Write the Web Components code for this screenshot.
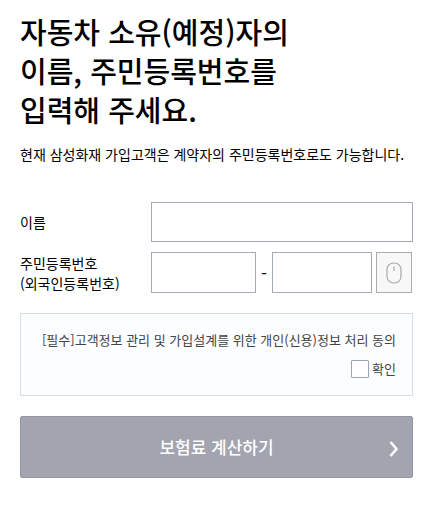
<!DOCTYPE html>
<html lang="ko">
<head>
<meta charset="utf-8">
<meta name="viewport" content="width=device-width, initial-scale=1">
<title>보험료 계산하기</title>
<style>
    body {
        margin: 0;
        background: #fff;
        color: #000;
        font: 13px/20px "Noto Sans CJK KR", sans-serif;
    }
</style>
</head>
<body>
<premium-form>
    <page-heading>
        자동차 소유(예정)자의<br>이름, 주민등록번호를<br>입력해 주세요.
        <span slot="note">현재 삼성화재 가입고객은 계약자의 주민등록번호로도 가능합니다.</span>
    </page-heading>
    <name-field></name-field>
    <resident-number-field></resident-number-field>
    <consent-box>[필수]고객정보 관리 및 가입설계를 위한 개인(신용)정보 처리 동의</consent-box>
    <submit-button>보험료 계산하기</submit-button>
</premium-form>

<script>
/** Styles shared by the labelled rows of the form. */
const fieldStyles = `
    :host {
        display: grid;
        grid-template-columns: 131px 1fr;
        align-items: center;
        margin-bottom: 10px;
        font-size: 14px;
    }
    input {
        box-sizing: border-box;
        width: 100%;
        min-width: 0;
        height: 40px;
        margin: 0;
        padding: 0 10px;
        border: 1px solid #a3abb5;
        border-radius: 0;
        background: #fff;
        font: inherit;
    }
`;

/**
 * Base class: attaches an open shadow root and fills it from template().
 */
class BaseElement extends HTMLElement {
    constructor() {
        super();
        this.attachShadow({ mode: 'open' });
        this.shadowRoot.innerHTML = this.template();
    }
}

/**
 * <premium-form> Page column that holds all parts of the form.
 */
class PremiumForm extends BaseElement {
    template() {
        return `
            <style>
                :host { display: block; padding: 12px 9px 32px 20px; }
            </style>
            <slot></slot>
        `;
    }
}

/**
 * <page-heading> Title with a note below it.
 */
class PageHeading extends BaseElement {
    template() {
        return `
            <style>
                :host { display: block; margin-bottom: 38px; }
                h1 { margin: 0 0 15px; font-size: 29px; line-height: 39px; font-weight: 500; }
                p { margin: 0; font-size: 14px; line-height: 20px; white-space: nowrap; }
            </style>
            <h1><slot></slot></h1>
            <p><slot name="note"></slot></p>
        `;
    }
}

/**
 * <name-field> Name row.
 */
class NameField extends BaseElement {
    template() {
        return `
            <style>${fieldStyles}</style>
            <label for="name">이름</label>
            <input id="name" type="text">
        `;
    }
}

/**
 * <resident-number-field> Two-part registration number with a mouse entry button.
 */
class ResidentNumberField extends BaseElement {
    template() {
        return `
            <style>
                ${fieldStyles}
                :host { margin-bottom: 20px; }
                .parts {
                    display: grid;
                    grid-template-columns: 105fr 16px 100fr 40px;
                    align-items: center;
                    padding-right: 1px;
                }
                input, button { height: 41px; }
                .dash { text-align: center; font-size: 17px; }
                button {
                    display: flex;
                    align-items: center;
                    justify-content: center;
                    margin: 0 0 0 4px;
                    padding: 0;
                    border: 1px solid #ababab;
                    background: #f8f8f8;
                }
            </style>
            <label for="front">주민등록번호<br>(외국인등록번호)</label>
            <div class="parts">
                <input id="front" type="text" maxlength="6">
                <span class="dash">-</span>
                <input type="password" maxlength="7" aria-label="주민등록번호 뒷자리">
                <button type="button" aria-label="마우스 입력">
                    <svg width="16" height="22" viewBox="0 0 16 22" fill="none" stroke="#aaa">
                        <rect x="1" y="1" width="14" height="20" rx="6.5" stroke-width="1.2"/>
                        <path d="M8 4.5v4.5" stroke-width="1.2"/>
                    </svg>
                </button>
            </div>
        `;
    }
}

/**
 * <consent-box> Consent text with its tick box.
 */
class ConsentBox extends BaseElement {
    template() {
        return `
            <style>
                :host {
                    display: block;
                    margin-bottom: 20px;
                    padding: 16px;
                    border: 1px solid #d8dce6;
                    background: #fcfdff;
                    color: #444;
                }
                p { margin: 0 0 9px; white-space: nowrap; text-align: right; }
                label { display: flex; align-items: center; justify-content: flex-end; gap: 3px; }
                input {
                    appearance: none;
                    box-sizing: border-box;
                    width: 18px;
                    height: 18px;
                    margin: 0;
                    border: 1px solid #9da5b2;
                    border-radius: 1px;
                    background: #fff;
                }
                input:checked { background: #9da5b2; }
            </style>
            <p><slot></slot></p>
            <label><input type="checkbox">확인</label>
        `;
    }
}

/**
 * <submit-button> Full-width button with an arrow at its right end.
 */
class SubmitButton extends BaseElement {
    template() {
        return `
            <style>
                :host { display: block; }
                button {
                    display: grid;
                    grid-template-columns: 1fr auto 1fr;
                    align-items: center;
                    width: 100%;
                    height: 62px;
                    padding: 0 13px;
                    border: 1px solid #9497a1;
                    border-radius: 2px;
                    background: #a2a4b0;
                    color: #fff;
                    font: 500 17px/24px "Noto Sans CJK KR", sans-serif;
                }
                span { grid-column: 2; }
                svg { justify-self: end; margin-top: 4px; }
            </style>
            <button type="button">
                <span><slot></slot></span>
                <svg width="10" height="16" viewBox="0 0 10 16" fill="none" stroke="#fff" stroke-width="2.6">
                    <path d="M1.5 1l6 7-6 7"/>
                </svg>
            </button>
        `;
    }
}

// Register the custom elements
customElements.define('premium-form', PremiumForm);
customElements.define('page-heading', PageHeading);
customElements.define('name-field', NameField);
customElements.define('resident-number-field', ResidentNumberField);
customElements.define('consent-box', ConsentBox);
customElements.define('submit-button', SubmitButton);
</script>
</body>
</html>
